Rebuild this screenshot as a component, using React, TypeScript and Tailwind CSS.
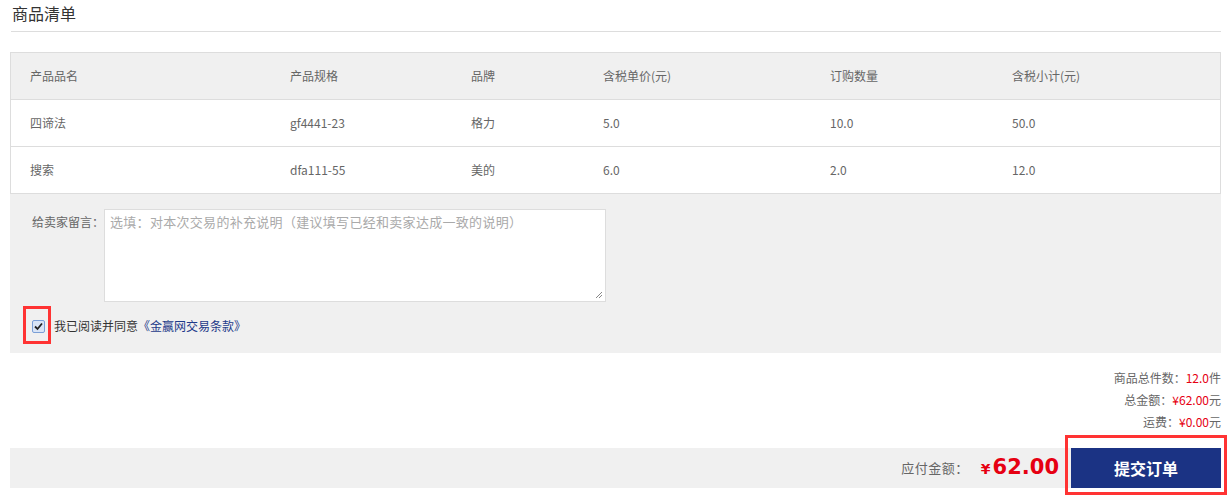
import React from "react";

const rows = [
  { name: "四谛法", spec: "gf4441-23", brand: "格力", price: "5.0", qty: "10.0", total: "50.0" },
  { name: "搜索", spec: "dfa111-55", brand: "美的", price: "6.0", qty: "2.0", total: "12.0" },
];

const cols = "grid grid-cols-[260px_181px_132px_227px_182px_1fr] items-center";

export default function App() {
  return (
    <div
      className="w-[1231px] h-[504px] bg-white px-[10px] text-[12px] text-[#666]"
      style={{ fontFamily: '"Noto Sans CJK SC", "Microsoft YaHei", sans-serif' }}
    >
      {/* title */}
      <div className="h-[32px] border-b border-[#ddd] ml-[1px] pl-[1px] text-[16px] leading-[26px] text-[#333]">
        商品清单
      </div>

      {/* table */}
      <div className="mt-[20px] border border-[#ddd]">
        <div className={`${cols} h-[47px] bg-[#f0f0f0] border-b border-[#ddd]`}>
          {["产品品名", "产品规格", "品牌", "含税单价(元)", "订购数量", "含税小计(元)"].map((h) => (
            <div key={h} className="pl-[19px]">
              {h}
            </div>
          ))}
        </div>
        {rows.map((r, i) => (
          <div
            key={r.spec}
            className={`${cols} ${i === 0 ? "h-[47px] border-b border-[#ddd]" : "h-[46px]"}`}
          >
            <div className="pl-[19px]">{r.name}</div>
            <div className="pl-[19px]">{r.spec}</div>
            <div className="pl-[19px]">{r.brand}</div>
            <div className="pl-[19px]">{r.price}</div>
            <div className="pl-[19px]">{r.qty}</div>
            <div className="pl-[19px]">{r.total}</div>
          </div>
        ))}
      </div>

      {/* message + agreement */}
      <div className="h-[159px] bg-[#f0f0f0] pt-[15px]">
        <div className="flex items-start">
          <div className="w-[94px] pt-[4px] text-right text-[12px] text-[#666]">给卖家留言：</div>
          <div className="relative w-[502px] h-[93px] bg-white border border-[#ddd]">
            <div className="px-[5px] pt-[2px] text-[13px] text-[#aaa] tracking-[0.3px]">
              选填：对本次交易的补充说明（建议填写已经和卖家达成一致的说明）
            </div>
            <svg className="absolute right-[2px] bottom-[2px]" width="8" height="8" viewBox="0 0 8 8">
              <path d="M7 1 L1 7 M7 4 L4 7" stroke="#888" strokeWidth="1" />
            </svg>
          </div>
        </div>
        <div className="mt-[15px] ml-[22px] flex items-center">
          <div className="relative w-[13px] h-[13px] rounded-[2px] border border-[#7b9fd6] bg-[#d8e4f6] flex items-center justify-center">
            <svg width="9" height="9" viewBox="0 0 9 9">
              <path d="M1 4.5 L3.5 7 L8 1.5" fill="none" stroke="#222" strokeWidth="1.8" />
            </svg>
            <div className="absolute left-[-10px] top-[-15px] w-[28px] h-[38px] border-[3px] border-[#f33]" />
          </div>
          <div className="ml-[9px] text-[#333]">
            我已阅读并同意<span className="text-[#1e3a8a]">《金赢网交易条款》</span>
          </div>
        </div>
      </div>

      {/* summary */}
      <div className="mt-[14px] text-right leading-[22px] text-[#666]">
        <div>
          商品总件数：<span className="text-[#e60012]">12.0</span>件
        </div>
        <div>
          总金额：<span className="text-[#e60012]">¥62.00</span>元
        </div>
        <div>
          运费：<span className="text-[#e60012]">¥0.00</span>元
        </div>
      </div>

      {/* pay bar */}
      <div className="mt-[15px] h-[40px] bg-[#f0f0f0] flex items-center justify-end">
        <div className="text-[13px] text-[#666] tracking-[0.5px]">应付金额：</div>
        <div
          className="ml-[12px] flex items-baseline text-[#e60012] font-bold"
          style={{ fontFamily: '"DejaVu Sans", sans-serif' }}
        >
          <span className="text-[14px]">¥</span>
          <span className="text-[21px] ml-[2px]">62.00</span>
        </div>
        <div className="relative ml-[12px] h-[40px]">
          <button className="w-[150px] h-[40px] bg-[#1b3384] text-white text-[16px] font-bold">提交订单</button>
          <div className="absolute left-[-6px] top-[-13px] w-[162px] h-[60px] border-[3px] border-[#f33]" />
        </div>
      </div>
    </div>
  );
}
